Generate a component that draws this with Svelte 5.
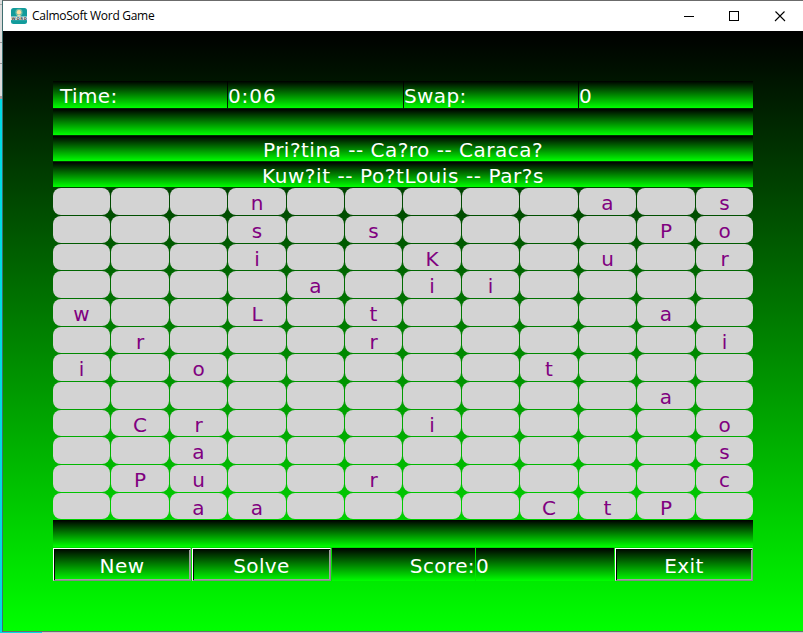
<script>
  const rows = [
    '...n.....a.s',
    '...s.s....Po',
    '...i..K..u.r',
    '....a.ii....',
    'w..L.t....a.',
    '.r...r.....i',
    'i.o.....t...',
    '..........a.',
    '.Cr...i....o',
    '..a........s',
    '.Pu..r.....c',
    '..aa....CtP.'
  ];
  const cells = rows.flatMap((row) => [...row].map((c) => (c === '.' ? '' : c)));
</script>

<div class="desktop">
  <div class="strip"></div>
  <div class="window">
    <header>
      <svg class="logo" width="16" height="16" viewBox="0 0 16 16">
        <rect width="16" height="16" rx="2.5" fill="#129b9b" />
        <circle cx="8" cy="4.4" r="3.6" fill="#70bda4" />
        <circle cx="8" cy="4.3" r="2.2" fill="#ffdca0" />
        <path d="M6.5 7h3v1.5h-3z" fill="#e8d6ae" />
        <path d="M0 8.5h16v3.6H0z" fill="#e3eeee" />
        <text x="0.6" y="11.8" font-size="3.8" font-weight="bold" letter-spacing="0.6" fill="#444">WORD</text>
      </svg>
      <span class="title">CalmoSoft Word Game</span>
      <svg class="controls" width="118" height="29" viewBox="0 0 118 29" fill="none" stroke="#000" shape-rendering="crispEdges">
        <path d="M-1 14.5h10M44.5 9.5h9v9h-9z" />
        <path d="M90.5 9.5l9.5 9.5M99.5 9.5l-9.5 9.5" shape-rendering="auto" stroke-width="1.1" />
      </svg>
    </header>
    <main>
      <div class="stats">
        <div class="bar time">Time:</div>
        <div class="bar clock">0:06</div>
        <div class="bar">Swap:</div>
        <div class="bar">0</div>
      </div>
      <div class="bar blank"></div>
      <div class="bar words">Pri?tina -- Ca?ro -- Caraca?</div>
      <div class="bar words wide">Kuw?it -- Po?tLouis -- Par?s</div>
      <div class="grid">
        {#each cells as c}
          <div class="cell">{c}</div>
        {/each}
      </div>
      <div class="bar bottom"></div>
      <div class="actions">
        <button>New</button>
        <button>Solve</button>
        <div class="bar score">Score:</div>
        <div class="bar">0</div>
        <button>Exit</button>
      </div>
    </main>
  </div>
</div>

<style>
  :global(body) { margin: 0; overflow: hidden; }
  .desktop {
    width: 803px;
    height: 633px;
    box-sizing: border-box;
    display: flex;
    padding-bottom: 1px;
    background: linear-gradient(90deg, #00dce6 42px, #c8c8c8 42px);
    font-family: "DejaVu Sans", Verdana, sans-serif;
  }
  .strip {
    width: 2px;
    background:
      linear-gradient(#aaa, #aaa) 0 4px / 2px 1px no-repeat,
      linear-gradient(#999, #999) 0 42px / 2px 1px no-repeat,
      linear-gradient(#999, #999) 0 63px / 2px 1px no-repeat,
      linear-gradient(#dcdcdc 96px, #b09c9c 96px, #b09c9c 99px, #00dce6 99px);
  }
  .window {
    width: 801px;
    height: 632px;
    box-sizing: border-box;
    border: solid #6b6b6b;
    border-width: 1px 0 1px 1px;
    border-left-color: #3f6f70;
  }
  header {
    height: 30px;
    display: flex;
    align-items: center;
    background: #fff;
  }
  .logo { margin: 0 0 1px 8px; }
  .title {
    margin-left: 5px;
    flex: 1;
    font: 12px/30px "Open Sans", "Noto Sans", sans-serif;
    letter-spacing: -0.28px;
    color: #000;
    white-space: nowrap;
  }
  .controls { overflow: visible; }
  main {
    height: 600px;
    box-sizing: border-box;
    padding: 50px 50px 0;
    background: linear-gradient(#000, #0f0);
    font-size: 20px;
    color: #fff;
  }
  .bar { background: linear-gradient(#000, #0f0); white-space: nowrap; letter-spacing: 0.4px; }
  .stats {
    display: grid;
    grid-template-columns: 174px 175px 174px 174px;
    grid-template-rows: 27px;
    column-gap: 1px;
    line-height: 31px;
    background: linear-gradient(#000, #020);
  }
  .time { padding-left: 7px; }
  .clock { letter-spacing: 0.9px; }
  .blank { height: 26px; margin-top: 1px; }
  .words {
    height: 25px;
    margin-top: 1px;
    line-height: 28px;
    text-align: center;
    letter-spacing: 0.5px;
  }
  .wide { letter-spacing: 0.58px; }
  .grid {
    margin-top: 1px;
    display: grid;
    gap: 1px;
    grid-template-columns: 57px 58px 57px 58px 57px 57px 58px 57px 58px 57px 58px 57px;
    grid-template-rows: 27px 27px 26px 27px 27px 26px 27px 27px 26px 27px 27px 26px;
  }
  .cell {
    border-radius: 8px;
    background: #d3d3d3;
    color: #800080;
    line-height: 30px;
    text-align: center;
  }
  .bottom { height: 27px; margin-top: 1px; }
  .actions {
    margin-top: 1px;
    display: grid;
    grid-template-columns: 138px 139px 143px 138px 138px;
    grid-template-rows: 33px;
    column-gap: 1px;
    line-height: 37px;
  }
  .score { text-align: right; }
  button {
    margin: 0;
    padding: 2px 0 0;
    border: 1px solid;
    border-color: #fff #888 #888 #fff;
    border-radius: 0;
    background: linear-gradient(#000, #0f0) border-box;
    box-shadow: inset 1px 1px #000, inset -1px -1px #a0a0a0;
    font: inherit;
    line-height: 24px;
    letter-spacing: 0.4px;
    color: #fff;
  }
</style>
